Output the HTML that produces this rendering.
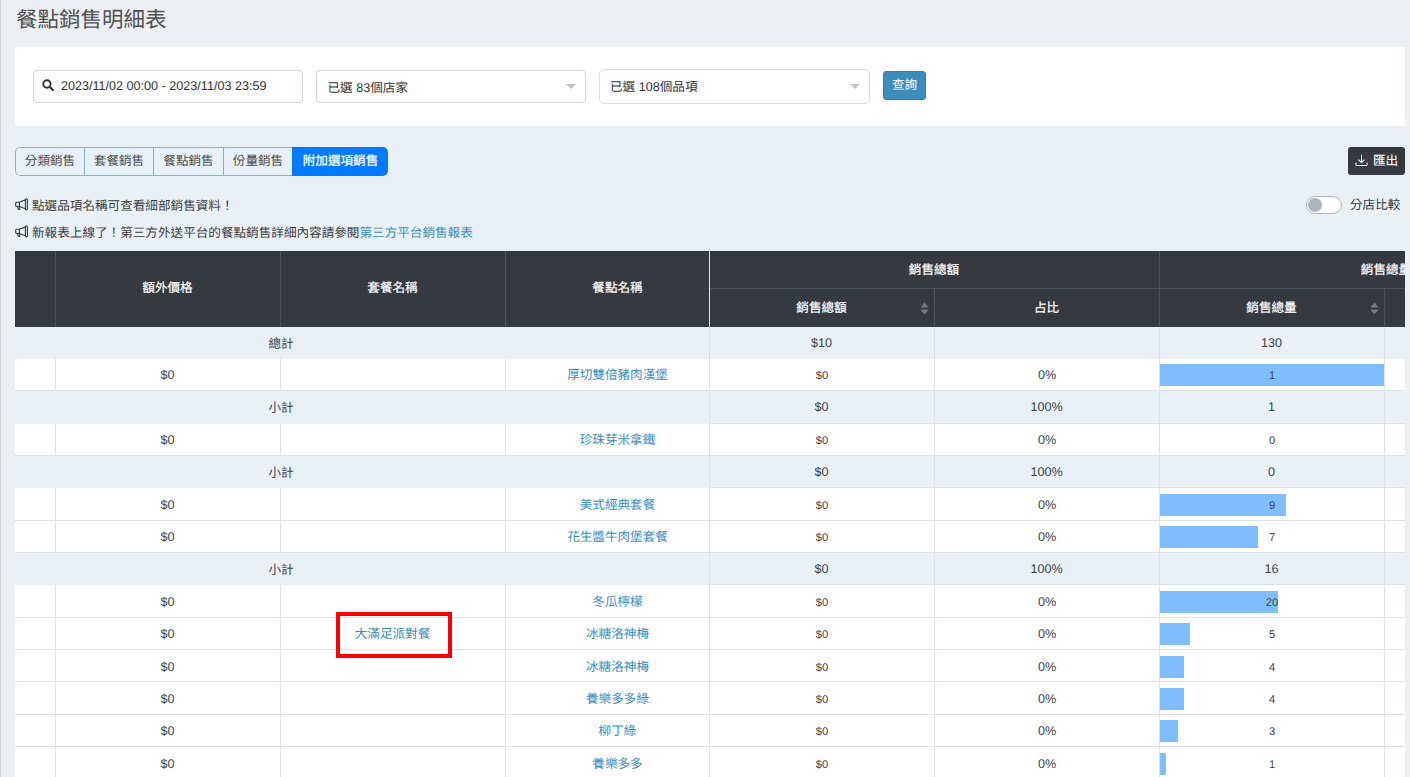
<!DOCTYPE html>
<html lang="zh-TW">
<head>
<meta charset="utf-8">
<title>餐點銷售明細表</title>
<style>
*{box-sizing:border-box;margin:0;padding:0}
html,body{width:1410px;height:777px;overflow:hidden}
body{background:#ecf0f5;font-family:"Liberation Sans",sans-serif;font-size:12.6px;font-weight:300;color:#333;position:relative;text-rendering:geometricPrecision}
.abs{position:absolute}
#edge{left:0;top:0;width:1px;height:777px;background:#c9d0da}
#title{left:16px;top:5px;font-size:21.5px;line-height:30px;color:#505050;white-space:nowrap;font-weight:400}
#content{left:15px;top:47px;width:1390px;height:730px;background:#e9f1f7}
#panel{left:15px;top:47px;width:1390px;height:79px;background:#fff}
.inp{background:#fff;border:1px solid #d2d6de;border-radius:4px;height:33px;line-height:31px;white-space:nowrap;color:#333}
#date{left:33px;top:70px;width:270px;padding-left:27px}
#sel1{left:316px;top:70px;width:270px;padding-left:10.5px;line-height:35px}
#sel2{left:599px;top:69px;width:271px;height:35px;line-height:35px;padding-left:10px;border-color:#dcdfe4;border-radius:5px}
.caret{position:absolute;right:9px;top:13px;width:0;height:0;border-left:5px solid transparent;border-right:5px solid transparent;border-top:5px solid #c4c4c4}
#sel2 .caret{top:14px;right:9px}
#btnq{left:883px;top:71px;width:43px;height:29px;background:#3c8dbc;border:1px solid #367fa9;border-radius:3px;color:#fff;text-align:center;line-height:27.5px}
#tabs{left:15px;top:147px;height:29px;display:flex;border-radius:5px;overflow:hidden;background:#e8f1f9}
#tabs div{height:29px;line-height:27px;text-align:center;white-space:nowrap;color:#4c4c4c;border:1px solid #80b1da;border-right:0}
#tabs .t{width:69px}
#tabs .t:first-child{border-radius:5px 0 0 5px}
#tabs .t:nth-child(3){width:70px}
#tabs .on{width:96px;background:#007bff;color:#fff;font-weight:400;-webkit-text-stroke:.25px #fff;border-color:#007bff;border-radius:0 5px 5px 0}
#export{left:1348px;top:147px;width:57px;height:28px;background:#343a40;border-radius:3px;color:#fff;line-height:26px;white-space:nowrap}
#export span{position:absolute;left:25px;top:1px;font-weight:400;-webkit-text-stroke:.12px #fff}
#toggle{left:1306px;top:196px;width:36px;height:18px;border:1px solid #adb5bd;border-radius:9px;background:#fff}
#toggle i{position:absolute;left:1px;top:1px;width:14px;height:14px;border-radius:7px;background:#adb5bd}
#tlabel{left:1350px;top:196px;line-height:18px;font-weight:400;color:#2f3943;white-space:nowrap}
.note{left:32px;line-height:18px;white-space:nowrap;color:#3c3c3c}
.note a{color:#3c8dbc;text-decoration:none}
.mega{left:15px;width:13px;height:13px}
#tbl{left:15px;top:251px;width:1390px;height:526px;overflow:hidden}
#tbl i{position:absolute;display:block}
.hd{background:#343a40}
.hv{width:1px;background:#4b535b}
.hh{height:1px;background:#4b535b}
.hw{width:1px;background:#e4e8ec}
.th{color:#fff;font-weight:400;-webkit-text-stroke:.2px #fff;text-align:center;white-space:nowrap;overflow:visible}
.sort{position:absolute;right:5.5px;top:12.5px}
.r{left:0;width:1390px;white-space:nowrap}
.r.w{background:#fff}
.r.s{background:#e9f1f7}
.c{position:absolute;top:0;text-align:center;font-weight:300;color:#3a434c;display:block}
a.c{color:#3c8dbc}
.sm{font-size:11.2px;top:1px;margin-left:.5px}
.bb{bottom:0;height:1px;background:#dee2e6}
.v{top:0;bottom:0;width:1px;background:#dee2e6}
.bv{width:1px;background:#dee2e6}
.bar{left:1145px;top:5px;height:22px;background:#80bdff}
.d1 .c{top:1px}
.d1 .sm{top:2px}
.d1 .bar{top:6px}
#red{left:336px;top:612px;width:116px;height:46px;border:4px solid #fe0000}
</style>
</head>
<body>
<div id="edge" class="abs"></div>
<div id="title" class="abs">餐點銷售明細表</div>
<div id="content" class="abs"></div>
<div id="panel" class="abs"></div>

<div id="date" class="abs inp">
  <svg class="abs" style="left:8px;top:8px" width="13" height="13" viewBox="0 0 13 13"><circle cx="4.9" cy="5" r="3.7" fill="none" stroke="#333" stroke-width="1.9"/><path d="M7.8 7.9 L10.9 11" stroke="#333" stroke-width="2.1" stroke-linecap="round"/></svg>
  2023/11/02 00:00 - 2023/11/03 23:59</div>
<div id="sel1" class="abs inp">已選 83個店家<span class="caret"></span></div>
<div id="sel2" class="abs inp">已選 108個品項<span class="caret"></span></div>
<div id="btnq" class="abs">查詢</div>

<div id="tabs" class="abs"><div class="t">分類銷售</div><div class="t">套餐銷售</div><div class="t">餐點銷售</div><div class="t">份量銷售</div><div class="on">附加選項銷售</div></div>

<div id="export" class="abs">
  <svg class="abs" style="left:7px;top:6.5px" width="13" height="13" viewBox="0 0 14 14" fill="none" stroke="#fff" stroke-width="1.1" stroke-linecap="round" stroke-linejoin="round"><path d="M7 1.2v8M3.9 6.3 7 9.4l3.1-3.1M1 9.3v2.2c0 .6.4 1 1 1h10c.6 0 1-.4 1-1V9.3"/></svg>
  <span>匯出</span></div>
<div id="toggle" class="abs"><i></i></div>
<div id="tlabel" class="abs">分店比較</div>

<svg class="abs mega" style="top:198px" viewBox="0 0 13 13" fill="none" stroke="#34404c" stroke-width="1.15" stroke-linejoin="round" stroke-linecap="round"><path d="M4.4 4.2H1.7a1 1 0 0 0-1 1v2.3a1 1 0 0 0 1 1h2.7z"/><path d="M4.4 4.2l6-2.3M4.4 8.5l6 2.2"/><rect x="10.4" y="0.8" width="2" height="11" rx="1"/><path d="M2.7 8.6l.6 2.7h1.5l-.3-2.6"/></svg>
<div class="abs note" style="top:197px">點選品項名稱可查看細部銷售資料！</div>
<svg class="abs mega" style="top:225.2px" viewBox="0 0 13 13" fill="none" stroke="#34404c" stroke-width="1.15" stroke-linejoin="round" stroke-linecap="round"><path d="M4.4 4.2H1.7a1 1 0 0 0-1 1v2.3a1 1 0 0 0 1 1h2.7z"/><path d="M4.4 4.2l6-2.3M4.4 8.5l6 2.2"/><rect x="10.4" y="0.8" width="2" height="11" rx="1"/><path d="M2.7 8.6l.6 2.7h1.5l-.3-2.6"/></svg>
<div class="abs note" style="top:224px">新報表上線了！第三方外送平台的餐點銷售詳細內容請參閱<a>第三方平台銷售報表</a></div>

<!--TBEGIN-->
<div id="tbl" class="abs">
<div class="hd abs" style="left:0;top:0;width:1390px;height:76px"></div>
<i class="hv" style="left:40px;top:0;height:76px"></i>
<i class="hv" style="left:265px;top:0;height:76px"></i>
<i class="hv" style="left:490px;top:0;height:76px"></i>
<i class="hv" style="left:1144px;top:0;height:76px"></i>
<i class="hv" style="left:919px;top:38px;height:38px"></i>
<i class="hv" style="left:1369px;top:38px;height:38px"></i>
<i class="hh" style="left:695px;top:37px;width:695px"></i>
<i class="hw" style="left:694px;top:0;height:76px"></i>
<div class="th abs" style="left:40px;top:0px;width:225px;height:75px;line-height:75px">額外價格</div>
<div class="th abs" style="left:265px;top:0px;width:225px;height:75px;line-height:75px">套餐名稱</div>
<div class="th abs" style="left:490px;top:0px;width:225px;height:75px;line-height:75px">餐點名稱</div>
<div class="th abs" style="left:694px;top:0px;width:450px;height:38px;line-height:38px">銷售總額</div>
<div class="th abs" style="left:1148px;top:0px;width:446px;height:38px;line-height:38px">銷售總量</div>
<div class="th abs" style="left:694px;top:38px;width:225px;height:39px;line-height:39px">銷售總額<svg class="sort" width="9" height="13" viewBox="0 0 9 13"><path d="M4.5 0.5 8.6 5.6H0.4z" fill="#727a82"/><path d="M4.5 12.5 8.6 7.4H0.4z" fill="#727a82"/></svg></div>
<div class="th abs" style="left:919px;top:38px;width:225px;height:39px;line-height:39px">占比</div>
<div class="th abs" style="left:1144px;top:38px;width:225px;height:39px;line-height:39px">銷售總量<svg class="sort" width="9" height="13" viewBox="0 0 9 13"><path d="M4.5 0.5 8.6 5.6H0.4z" fill="#727a82"/><path d="M4.5 12.5 8.6 7.4H0.4z" fill="#727a82"/></svg></div>
<div class="r s abs" style="top:76px;height:32px;line-height:32px"><b class="c" style="left:41px;top:1px;width:450px">總計</b><b class="c" style="left:694px;width:225px">$10</b><b class="c" style="left:919px;width:225px"></b><b class="c" style="left:1144px;width:225px">130</b></div>
<div class="r w abs" style="top:108px;height:32px;line-height:32px"><b class="c" style="left:40px;width:225px">$0</b><a class="c" style="left:490px;width:225px">厚切雙倍豬肉漢堡</a><b class="c sm" style="left:694px;width:225px">$0</b><b class="c" style="left:919px;width:226px">0%</b><i class="bar" style="width:224px"></i><b class="c sm" style="left:1144px;width:225px">1</b><i class="bb" style="left:0;width:1390px"></i><i class="v" style="left:40px"></i><i class="v" style="left:265px"></i><i class="v" style="left:490px"></i></div>
<div class="r s abs" style="top:140px;height:33px;line-height:33px"><b class="c" style="left:41px;top:1px;width:450px">小計</b><b class="c" style="left:694px;width:225px">$0</b><b class="c" style="left:919px;width:225px">100%</b><b class="c" style="left:1144px;width:225px">1</b><i class="bb" style="left:694px;width:696px"></i></div>
<div class="r w abs" style="top:173px;height:32px;line-height:32px"><b class="c" style="left:40px;width:225px">$0</b><a class="c" style="left:490px;width:225px">珍珠芽米拿鐵</a><b class="c sm" style="left:694px;width:225px">$0</b><b class="c" style="left:919px;width:226px">0%</b><b class="c sm" style="left:1144px;width:225px">0</b><i class="bb" style="left:0;width:1390px"></i><i class="v" style="left:40px"></i><i class="v" style="left:265px"></i><i class="v" style="left:490px"></i></div>
<div class="r s abs" style="top:205px;height:32px;line-height:32px"><b class="c" style="left:41px;top:1px;width:450px">小計</b><b class="c" style="left:694px;width:225px">$0</b><b class="c" style="left:919px;width:225px">100%</b><b class="c" style="left:1144px;width:225px">0</b><i class="bb" style="left:694px;width:696px"></i></div>
<div class="r w d1 abs" style="top:237px;height:33px;line-height:33px"><b class="c" style="left:40px;width:225px">$0</b><a class="c" style="left:490px;width:225px">美式經典套餐</a><b class="c sm" style="left:694px;width:225px">$0</b><b class="c" style="left:919px;width:226px">0%</b><i class="bar" style="width:126px"></i><b class="c sm" style="left:1144px;width:225px">9</b><i class="bb" style="left:0;width:1390px"></i><i class="v" style="left:40px"></i><i class="v" style="left:265px"></i><i class="v" style="left:490px"></i></div>
<div class="r w abs" style="top:270px;height:32px;line-height:32px"><b class="c" style="left:40px;width:225px">$0</b><a class="c" style="left:490px;width:225px">花生醬牛肉堡套餐</a><b class="c sm" style="left:694px;width:225px">$0</b><b class="c" style="left:919px;width:226px">0%</b><i class="bar" style="width:98px"></i><b class="c sm" style="left:1144px;width:225px">7</b><i class="bb" style="left:0;width:1390px"></i><i class="v" style="left:40px"></i><i class="v" style="left:265px"></i><i class="v" style="left:490px"></i></div>
<div class="r s abs" style="top:302px;height:32px;line-height:32px"><b class="c" style="left:41px;top:1px;width:450px">小計</b><b class="c" style="left:694px;width:225px">$0</b><b class="c" style="left:919px;width:225px">100%</b><b class="c" style="left:1144px;width:225px">16</b><i class="bb" style="left:694px;width:696px"></i></div>
<div class="r w d1 abs" style="top:334px;height:33px;line-height:33px"><b class="c" style="left:40px;width:225px">$0</b><a class="c" style="left:490px;width:225px">冬瓜檸檬</a><b class="c sm" style="left:694px;width:225px">$0</b><b class="c" style="left:919px;width:226px">0%</b><i class="bar" style="width:118px"></i><b class="c sm" style="left:1144px;width:225px">20</b><i class="bb" style="left:0;width:1390px"></i><i class="v" style="left:40px"></i><i class="v" style="left:265px"></i><i class="v" style="left:490px"></i></div>
<div class="r w abs" style="top:367px;height:32px;line-height:32px"><b class="c" style="left:40px;width:225px">$0</b><a class="c" style="left:265px;width:225px">大滿足派對餐</a><a class="c" style="left:490px;width:225px">冰糖洛神梅</a><b class="c sm" style="left:694px;width:225px">$0</b><b class="c" style="left:919px;width:226px">0%</b><i class="bar" style="width:29.5px"></i><b class="c sm" style="left:1144px;width:225px">5</b><i class="bb" style="left:0;width:1390px"></i><i class="v" style="left:40px"></i><i class="v" style="left:265px"></i><i class="v" style="left:490px"></i></div>
<div class="r w d1 abs" style="top:399px;height:32px;line-height:32px"><b class="c" style="left:40px;width:225px">$0</b><a class="c" style="left:490px;width:225px">冰糖洛神梅</a><b class="c sm" style="left:694px;width:225px">$0</b><b class="c" style="left:919px;width:226px">0%</b><i class="bar" style="width:23.5px"></i><b class="c sm" style="left:1144px;width:225px">4</b><i class="bb" style="left:0;width:1390px"></i><i class="v" style="left:40px"></i><i class="v" style="left:265px"></i><i class="v" style="left:490px"></i></div>
<div class="r w d1 abs" style="top:431px;height:33px;line-height:33px"><b class="c" style="left:40px;width:225px">$0</b><a class="c" style="left:490px;width:225px">養樂多多綠</a><b class="c sm" style="left:694px;width:225px">$0</b><b class="c" style="left:919px;width:226px">0%</b><i class="bar" style="width:23.5px"></i><b class="c sm" style="left:1144px;width:225px">4</b><i class="bb" style="left:0;width:1390px"></i><i class="v" style="left:40px"></i><i class="v" style="left:265px"></i><i class="v" style="left:490px"></i></div>
<div class="r w abs" style="top:464px;height:32px;line-height:32px"><b class="c" style="left:40px;width:225px">$0</b><a class="c" style="left:490px;width:225px">柳丁綠</a><b class="c sm" style="left:694px;width:225px">$0</b><b class="c" style="left:919px;width:226px">0%</b><i class="bar" style="width:17.7px"></i><b class="c sm" style="left:1144px;width:225px">3</b><i class="bb" style="left:0;width:1390px"></i><i class="v" style="left:40px"></i><i class="v" style="left:265px"></i><i class="v" style="left:490px"></i></div>
<div class="r w d1 abs" style="top:496px;height:32px;line-height:32px"><b class="c" style="left:40px;width:225px">$0</b><a class="c" style="left:490px;width:225px">養樂多多</a><b class="c sm" style="left:694px;width:225px">$0</b><b class="c" style="left:919px;width:226px">0%</b><i class="bar" style="width:6px"></i><b class="c sm" style="left:1144px;width:225px">1</b><i class="bb" style="left:0;width:1390px"></i><i class="v" style="left:40px"></i><i class="v" style="left:265px"></i><i class="v" style="left:490px"></i></div>
<i class="bv" style="left:694px;top:76px;height:450px"></i>
<i class="bv" style="left:919px;top:76px;height:450px"></i>
<i class="bv" style="left:1144px;top:76px;height:450px"></i>
<i class="bv" style="left:1369px;top:76px;height:450px"></i>
</div>
<div id="red" class="abs"></div>
<!--TEND-->
</body>
</html>
